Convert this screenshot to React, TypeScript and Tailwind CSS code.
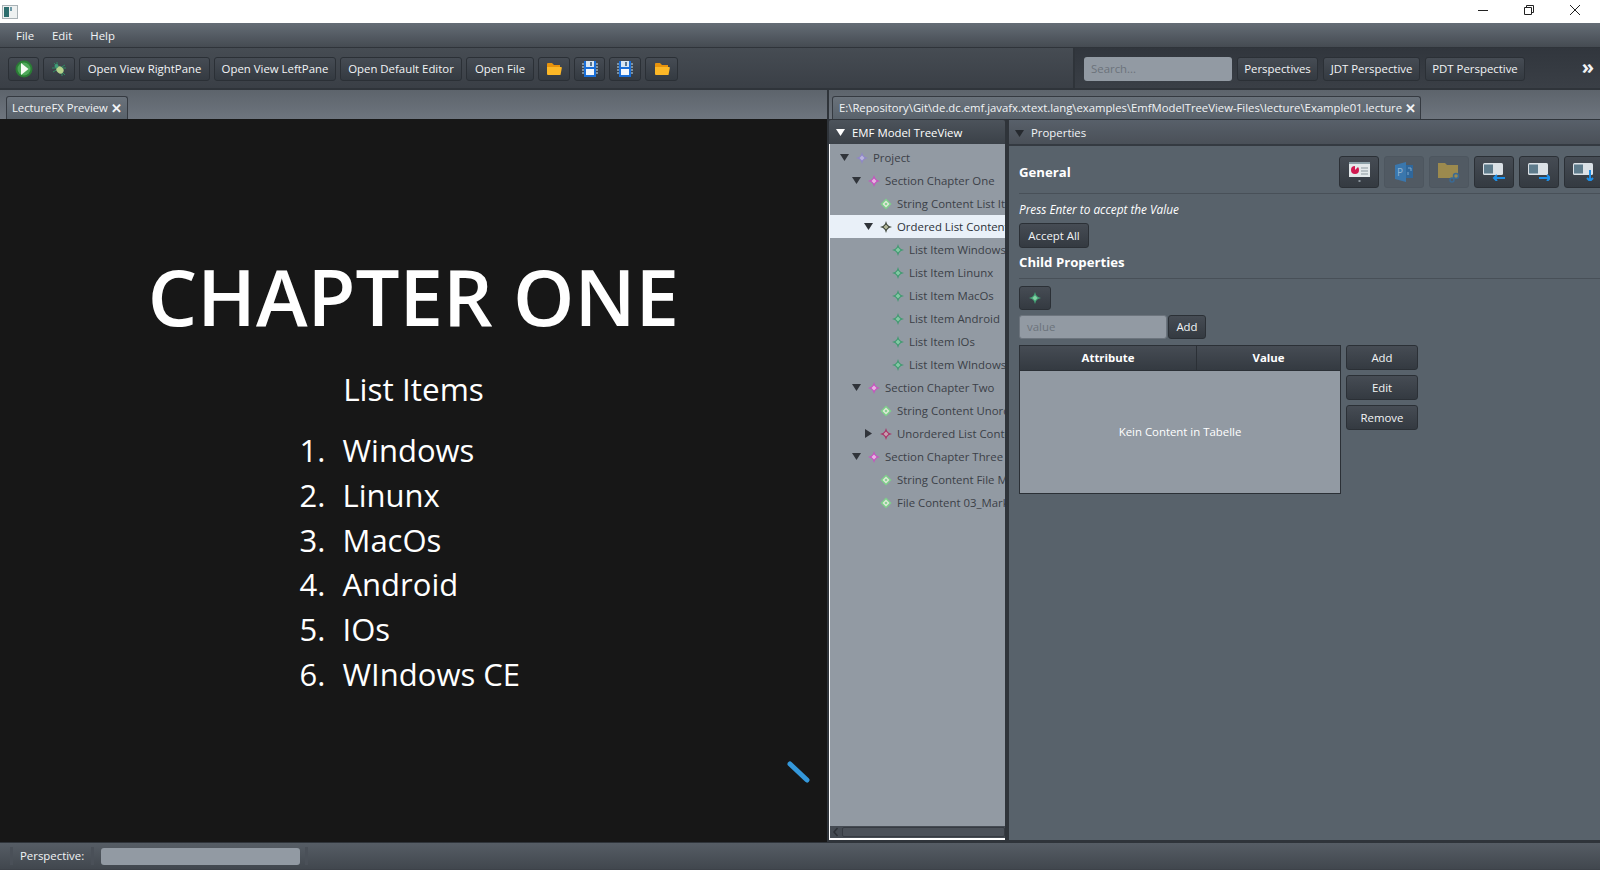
import type { ReactNode } from "react";

const btn =
  "flex items-center justify-center rounded-[3px] border border-[#2b3036] bg-gradient-to-b from-[#464c54] to-[#343a41] text-[#f2f4f6] whitespace-nowrap shrink-0";

const Diamond = ({ color, core = "#d8e8dc", solid }: { color: string; core?: string; solid?: boolean }) => (
  <svg width="12" height="12" viewBox="0 0 12 12" className="shrink-0">
    {solid ? (
      <>
        <path d="M6 0.5 L11.5 6 L6 11.5 L0.5 6 Z" fill={color} />
        <path d="M6 2.5 L9.5 6 L6 9.5 L2.5 6 Z" fill={core} />
        <path d="M6 4.5 L7.5 6 L6 7.5 L4.5 6 Z" fill={color} />
      </>
    ) : (
      <>
        <path d="M6 0 L7 3 L9 5 L12 6 L9 7 L7 9 L6 12 L5 9 L3 7 L0 6 L3 5 L5 3 Z" fill={color} />
        <path d="M6 3.5 L8.5 6 L6 8.5 L3.5 6 Z" fill={core} />
      </>
    )}
  </svg>
);

const Arrow = ({ open }: { open: boolean }) => (
  <svg width="9" height="9" viewBox="0 0 9 9" className="shrink-0">
    {open ? <path d="M0 1 H9 L4.5 8 Z" fill="currentColor" /> : <path d="M1 0 V9 L8 4.5 Z" fill="currentColor" />}
  </svg>
);

const Folder = () => (
  <svg width="16" height="14" viewBox="0 0 16 14">
    <path d="M1 2 Q1 1 2 1 H6 L8 3 H14 V5 H1 Z" fill="#e8930c" />
    <path d="M1 5 H15 Q16 5 15.8 6 L14.5 13 H2 Q1 13 1 12 Z" fill="#fdb827" />
  </svg>
);

const Floppy = () => (
  <svg width="18" height="18" viewBox="0 0 18 18">
    <path d="M3 1 H15 V17 H3 Z" fill="#1a6fd8" />
    <rect x="5" y="1" width="8" height="6" fill="#d8e6f2" />
    <rect x="9" y="2" width="2" height="4" fill="#5a7690" />
    <rect x="5" y="9" width="8" height="6" fill="#f4f8fc" />
    <path d="M1 4 H3 M1 7 H3 M1 10 H3 M1 13 H3 M15 4 H17 M15 7 H17 M15 10 H17 M15 13 H17" stroke="#bfe0f5" />
  </svg>
);

const PlayIcon = () => (
  <svg width="18" height="18" viewBox="0 0 18 18">
    <circle cx="9" cy="9" r="8.5" fill="#2a7d35" />
    <circle cx="9" cy="9" r="6.5" fill="#4ea85a" />
    <path d="M6 3 L13.5 9 L6 15 Z" fill="#f6fbf4" />
  </svg>
);

const BugIcon = () => (
  <svg width="16" height="16" viewBox="0 0 16 16">
    <path d="M3 2 L14 14 M14 4 L2 11 M1 7 H15 M6 1 V4 M11 12 V15" stroke="#2f8a63" strokeWidth="1" />
    <ellipse cx="9" cy="9" rx="3.8" ry="3.2" fill="#b4d48c" transform="rotate(40 9 9)" />
    <circle cx="5.5" cy="5" r="2" fill="#3f9c77" />
  </svg>
);

const SlideIcon = () => (
  <svg width="21" height="20" viewBox="0 0 21 20">
    <rect x="0" y="0" width="21" height="15" fill="#e3e8ea" />
    <rect x="0" y="0" width="21" height="2" fill="#8da0a8" />
    <circle cx="6" cy="8" r="4" fill="#d0184f" />
    <path d="M6 8 V4 H10 Z" fill="#e3e8ea" />
    <path d="M12 6 H19 M12 9 H19 M12 12 H19" stroke="#8b979d" />
    <rect x="9.5" y="18" width="2" height="2" fill="#8a949c" />
  </svg>
);

const ProjectIcon = () => (
  <svg width="18" height="20" viewBox="0 0 18 20">
    <path d="M0 3 L11 0 V20 L0 17 Z" fill="#3a77ad" />
    <path d="M11 3 H18 V16 H11 Z" fill="#2f679b" />
    <text x="2" y="14" fontSize="10" fontFamily="Open Sans" fill="#8fb4d4">P</text>
    <path d="M13 6 H16 V9 M13 13 V10" stroke="#7ea7c9" fill="none" />
  </svg>
);

const LinkedFolder = () => (
  <svg width="24" height="21" viewBox="0 0 24 21">
    <path d="M1 1 H8 L10 3 H21 V16 H1 Z" fill="#9c8a4e" />
    <circle cx="19" cy="14" r="2.5" fill="none" stroke="#3a6a94" strokeWidth="1.5" />
    <circle cx="15" cy="18" r="2" fill="none" stroke="#3a6a94" strokeWidth="1.5" />
  </svg>
);

const PaneIcon = ({ dir }: { dir: "left" | "right" | "down" }) => (
  <svg width="22" height="18" viewBox="0 0 22 18">
    <rect x="0" y="0" width="20" height="12" rx="1.5" fill="#dbe1e6" />
    <rect x="1" y="1.5" width="9" height="9" fill="#5f7c8c" />
    {dir === "left" && <path d="M11 15 H22 M14 12 L11 15 L14 18" stroke="#1d8fe8" strokeWidth="2" fill="none" />}
    {dir === "right" && <path d="M11 15 H22 M19 12 L22 15 L19 18" stroke="#1d8fe8" strokeWidth="2" fill="none" />}
    {dir === "down" && <path d="M17 7 V18 M14 15 L17 18 L20 15" stroke="#1d8fe8" strokeWidth="2" fill="none" />}
  </svg>
);

const ToolBtn = ({ w, children }: { w: string; children: ReactNode }) => (
  <button className={`${btn} h-[24px] ${w}`}>{children}</button>
);

const IconBtn = ({ dim, children }: { dim?: boolean; children: ReactNode }) => (
  <button
    className={
      dim
        ? "flex h-[32px] w-[40px] shrink-0 items-center justify-center rounded-[3px] border border-[#4d565f] bg-[#515a63]"
        : "flex h-[32px] w-[40px] shrink-0 items-center justify-center rounded-[3px] border border-[#2b3036] bg-gradient-to-b from-[#464c54] to-[#343a41]"
    }
  >
    {children}
  </button>
);

type TreeRow = { label: string; depth: number; color: string; core?: string; solid?: boolean; arrow?: "open" | "closed"; selected?: boolean };

const green = "#3f9a70";
const lime = "#7ed08a";
const pink = "#c84fc0";

const tree: TreeRow[] = [
  { label: "Project", depth: 0, color: "#8f86c8", core: "#b9b4dc", arrow: "open" },
  { label: "Section Chapter One", depth: 1, color: pink, core: "#e6b4e2", arrow: "open" },
  { label: "String Content List Items", depth: 2, color: lime, core: "#dfe8d8", solid: true },
  { label: "Ordered List Content", depth: 2, color: "#3c4438", core: "#b4b89a", arrow: "open", selected: true },
  { label: "List Item Windows", depth: 3, color: green, core: "#84c8a4" },
  { label: "List Item Linunx", depth: 3, color: green, core: "#84c8a4" },
  { label: "List Item MacOs", depth: 3, color: green, core: "#84c8a4" },
  { label: "List Item Android", depth: 3, color: green, core: "#84c8a4" },
  { label: "List Item IOs", depth: 3, color: green, core: "#84c8a4" },
  { label: "List Item WIndows CE", depth: 3, color: green, core: "#84c8a4" },
  { label: "Section Chapter Two", depth: 1, color: pink, core: "#e6b4e2", arrow: "open" },
  { label: "String Content Unordered", depth: 2, color: lime, core: "#dfe8d8", solid: true },
  { label: "Unordered List Content", depth: 2, color: "#a82f66", core: "#c8a0b0", arrow: "closed" },
  { label: "Section Chapter Three", depth: 1, color: pink, core: "#e6b4e2", arrow: "open" },
  { label: "String Content File Markdown", depth: 2, color: lime, core: "#dfe8d8", solid: true },
  { label: "File Content 03_Markdown", depth: 2, color: lime, core: "#dfe8d8", solid: true },
];

const slideItems = ["Windows", "Linunx", "MacOs", "Android", "IOs", "WIndows CE"];

export default function App() {
  return (
    <div className="flex h-[870px] w-[1600px] flex-col overflow-hidden bg-[#3d4249] font-['Open_Sans',sans-serif] text-[11.4px] text-[#f2f4f6]">
      {/* Window title bar */}
      <div className="flex h-[23px] shrink-0 items-center justify-between bg-white">
        <svg width="16" height="14" viewBox="0 0 16 14" className="ml-[2px]">
          <rect x="0.5" y="0.5" width="15" height="13" fill="#eef1f1" stroke="#a9b2b6" />
          <rect x="2" y="2" width="5" height="10" fill="#2c6e6e" />
          <rect x="8" y="2" width="2" height="4" fill="#6f9aa8" />
        </svg>
        <div className="flex items-center gap-[36px] pr-[20px] pb-[3px] text-[#222]">
          <svg width="10" height="10" viewBox="0 0 10 10"><path d="M0 5.5 H10" stroke="#222" /></svg>
          <svg width="10" height="10" viewBox="0 0 10 10" fill="none"><path d="M0.5 2.5 H7.5 V9.5 H0.5 Z M2.5 2.5 V0.5 H9.5 V7.5 H7.5" stroke="#222" /></svg>
          <svg width="10" height="10" viewBox="0 0 10 10"><path d="M0 0 L10 10 M10 0 L0 10" stroke="#222" /></svg>
        </div>
      </div>

      {/* Menu bar */}
      <div className="flex h-[25px] shrink-0 items-center gap-[18px] border-b border-[#2f343a] bg-gradient-to-b from-[#656d76] to-[#454b52] pl-[16px] pt-[2px]">
        <span>File</span>
        <span>Edit</span>
        <span>Help</span>
      </div>

      {/* Tool bars */}
      <div className="flex h-[42px] shrink-0 border-b-2 border-[#2f343a]">
        <div className="flex w-[1075px] shrink-0 items-center gap-[4px] border-r-2 border-[#2f343a] bg-gradient-to-b from-[#464c53] to-[#3a3f46] pl-[8px] pt-[2px]">
          <ToolBtn w="w-[31px]"><PlayIcon /></ToolBtn>
          <ToolBtn w="w-[32px]"><BugIcon /></ToolBtn>
          <ToolBtn w="w-[131px]">Open View RightPane</ToolBtn>
          <ToolBtn w="w-[122px]">Open View LeftPane</ToolBtn>
          <ToolBtn w="w-[122px]">Open Default Editor</ToolBtn>
          <ToolBtn w="w-[68px]">Open File</ToolBtn>
          <ToolBtn w="w-[32px]"><Folder /></ToolBtn>
          <ToolBtn w="w-[31px]"><Floppy /></ToolBtn>
          <ToolBtn w="w-[32px]"><Floppy /></ToolBtn>
          <ToolBtn w="w-[33px]"><Folder /></ToolBtn>
        </div>
        <div className="flex flex-1 items-center bg-gradient-to-b from-[#31363d] to-[#3a3f46] pl-[9px] pt-[2px]">
          <div className="flex h-[24px] w-[148px] items-center rounded-[3px] bg-[#929aa3] pl-[7px] text-[#6c737b]">Search...</div>
          <div className="ml-[5px] flex gap-[5px]">
            <ToolBtn w="w-[81px]">Perspectives</ToolBtn>
            <ToolBtn w="w-[97px]">JDT Perspective</ToolBtn>
            <ToolBtn w="w-[100px]">PDT Perspective</ToolBtn>
          </div>
          <span className="ml-auto pr-[6px] pb-[4px] text-[20px] font-bold leading-none">»</span>
        </div>
      </div>

      {/* Work area */}
      <div className="flex h-[752px] shrink-0 bg-[#2f343a]">
        {/* Preview pane */}
        <div className="flex w-[827px] shrink-0 flex-col">
          <div className="flex h-[29px] shrink-0 items-end bg-gradient-to-b from-[#5d646c] to-[#6e757e] pl-[6px]">
            <div className="flex h-[23px] w-[122px] items-center rounded-t-[3px] border border-b-0 border-[#353a41] bg-gradient-to-b from-[#6a727b] to-[#59626b] pl-[5px] pt-[1px] text-[11.25px] whitespace-nowrap">
              LectureFX Preview
              <span className="ml-[3px] text-[13px] font-bold leading-none">✕</span>
            </div>
          </div>
          <div className="relative flex flex-1 flex-col items-center bg-[#171717] pt-[135px] text-white">
            <h1 className="text-[78px] leading-[84px] font-semibold">CHAPTER ONE</h1>
            <p className="mt-[28px] text-[31.5px] leading-[46px]">List Items</p>
            <ol className="mt-[16px] ml-[60px] w-[300px] pl-[6px] text-[31px] leading-[44.8px]">
              {slideItems.map((item, i) => (
                <li key={item} className="flex">
                  <span className="w-[43px]">{i + 1}.</span>
                  <span>{item}</span>
                </li>
              ))}
            </ol>
            <svg width="24" height="22" viewBox="0 0 24 22" className="absolute left-[787px] top-[642px]">
              <path d="M3 3 L20 19" stroke="#3498db" strokeWidth="5" strokeLinecap="round" />
            </svg>
          </div>
        </div>

        {/* Editor pane */}
        <div className="ml-[2px] flex flex-1 flex-col overflow-hidden">
          <div className="flex h-[29px] shrink-0 items-end bg-gradient-to-b from-[#5d646c] to-[#6e757e] pl-[3px]">
            <div className="flex h-[23px] w-[589px] items-center rounded-t-[3px] border border-b-0 border-[#353a41] bg-gradient-to-b from-[#6a727b] to-[#59626b] pl-[6px] pt-[1px] text-[11.3px] whitespace-nowrap">
              E:\Repository\Git\de.dc.emf.javafx.xtext.lang\examples\EmfModelTreeView-Files\lecture\Example01.lecture
              <span className="ml-[3px] text-[13px] font-bold leading-none">✕</span>
            </div>
          </div>
          <div className="flex flex-1 overflow-hidden pt-px">
            {/* Tree */}
            <div className="mb-[2px] flex w-[176px] shrink-0 flex-col">
              <div className="flex h-[24px] shrink-0 items-center gap-[7px] rounded-t-[2px] bg-gradient-to-b from-[#4c535b] to-[#3b4148] pl-[7px] pt-[1px] text-white">
                <Arrow open />
                EMF Model TreeView
              </div>
              <div className="flex min-h-0 flex-1 flex-col border-l border-b-2 border-white bg-[#929aa3] text-[#3b4047]">
                <div className="flex-1 overflow-hidden pt-[2px]">
                  {tree.map((row) => (
                    <div
                      key={row.label}
                      className={
                        row.selected
                          ? "flex h-[23px] items-center whitespace-nowrap bg-[#e9f0f8] text-[#2c3138]"
                          : "flex h-[23px] items-center whitespace-nowrap"
                      }
                      style={{ paddingLeft: 10 + row.depth * 12 }}
                    >
                      <span className="flex w-[9px] shrink-0 justify-center text-[#30343a]">
                        {row.arrow && <Arrow open={row.arrow === "open"} />}
                      </span>
                      <span className="ml-[7px] mr-[5px] flex"><Diamond color={row.color} core={row.core} solid={row.solid} /></span>
                      {row.label}
                    </div>
                  ))}
                </div>
                <div className="flex h-[12px] shrink-0 items-center bg-[#454b53] pl-[2px]">
                  <svg width="8" height="10" viewBox="0 0 8 10" fill="none"><path d="M5.5 1 L2 5 L5.5 9" stroke="#2d3137" strokeWidth="1.5" /></svg>
                  <div className="ml-[2px] h-[10px] flex-1 rounded-[2px] border border-[#363b42] bg-[#4b5159]" />
                </div>
              </div>
            </div>
            <div className="w-[4px] shrink-0 bg-[#2f343a]" />

            {/* Properties */}
            <div className="mb-[2px] flex min-w-0 flex-1 flex-col overflow-hidden bg-[#58626b]">
              <div className="flex h-[26px] shrink-0 items-center gap-[7px] border-b-2 border-[#343a41] bg-gradient-to-b from-[#58606a] to-[#4a5058] pl-[6px] pt-[2px]">
                <span className="text-[#262a2f]"><Arrow open /></span>
                Properties
              </div>
              <div className="flex flex-col pl-[10px]">
                <div className="flex h-[48px] items-center border-b border-[#485058] pt-[5px]">
                  <span className="pt-[2px] text-[13.2px] font-bold text-white">General</span>
                  <div className="ml-auto -mr-[4px] flex gap-[5px] pl-[5px]">
                    <IconBtn><SlideIcon /></IconBtn>
                    <IconBtn dim><ProjectIcon /></IconBtn>
                    <IconBtn dim><LinkedFolder /></IconBtn>
                    <IconBtn><PaneIcon dir="left" /></IconBtn>
                    <IconBtn><PaneIcon dir="right" /></IconBtn>
                    <IconBtn><PaneIcon dir="down" /></IconBtn>
                  </div>
                </div>
                <p className="mt-[6px] text-[11.8px] leading-[18px] italic text-white">Press Enter to accept the Value</p>
                <button className={`${btn} mt-[5px] h-[25px] w-[70px]`}>Accept All</button>
                <div className="flex h-[31px] items-center border-b border-[#485058] text-[13.2px] font-bold text-white">Child Properties</div>
                <button className={`${btn} mt-[7px] h-[24px] w-[32px]`}><Diamond color="#46a878" core="#84d0a4" /></button>
                <div className="mt-[5px] flex gap-px">
                  <div className="flex h-[24px] w-[148px] items-center rounded-[3px] border border-[#6c747d] bg-[#929aa3] pl-[7px] text-[#6c737b]">value</div>
                  <button className={`${btn} h-[24px] w-[38px]`}>Add</button>
                </div>
                <div className="mt-[6px] flex gap-[5px]">
                  <div className="flex h-[149px] w-[322px] flex-col border border-[#2b3036] bg-[#929aa3]">
                    <div className="flex h-[24px] shrink-0 bg-gradient-to-b from-[#464c54] to-[#343a41] font-bold text-white">
                      <div className="flex w-[177px] items-center justify-center border-r border-[#2b3036]">Attribute</div>
                      <div className="flex flex-1 items-center justify-center">Value</div>
                    </div>
                    <div className="flex flex-1 items-center justify-center border-t border-[#2b3036] text-white">Kein Content in Tabelle</div>
                  </div>
                  <div className="flex flex-col gap-[5px]">
                    <button className={`${btn} h-[25px] w-[72px]`}>Add</button>
                    <button className={`${btn} h-[25px] w-[72px]`}>Edit</button>
                    <button className={`${btn} h-[25px] w-[72px]`}>Remove</button>
                  </div>
                </div>
              </div>
            </div>
          </div>
        </div>
      </div>

      {/* Status bar */}
      <div className="flex h-[27px] shrink-0 items-center border-t border-[#2f343a] bg-gradient-to-b from-[#565d65] to-[#41474e]">
        <div className="ml-[10px] h-[18px] w-[3px] bg-[#4a5058]" />
        <span className="ml-[7px] w-[71px]">Perspective:</span>
        <div className="h-[18px] w-[3px] bg-[#4a5058]" />
        <div className="ml-[7px] h-[17px] w-[199px] rounded-[3px] bg-[#929aa3]" />
        <div className="ml-[5px] h-[18px] w-[3px] bg-[#4a5058]" />
      </div>
    </div>
  );
}
